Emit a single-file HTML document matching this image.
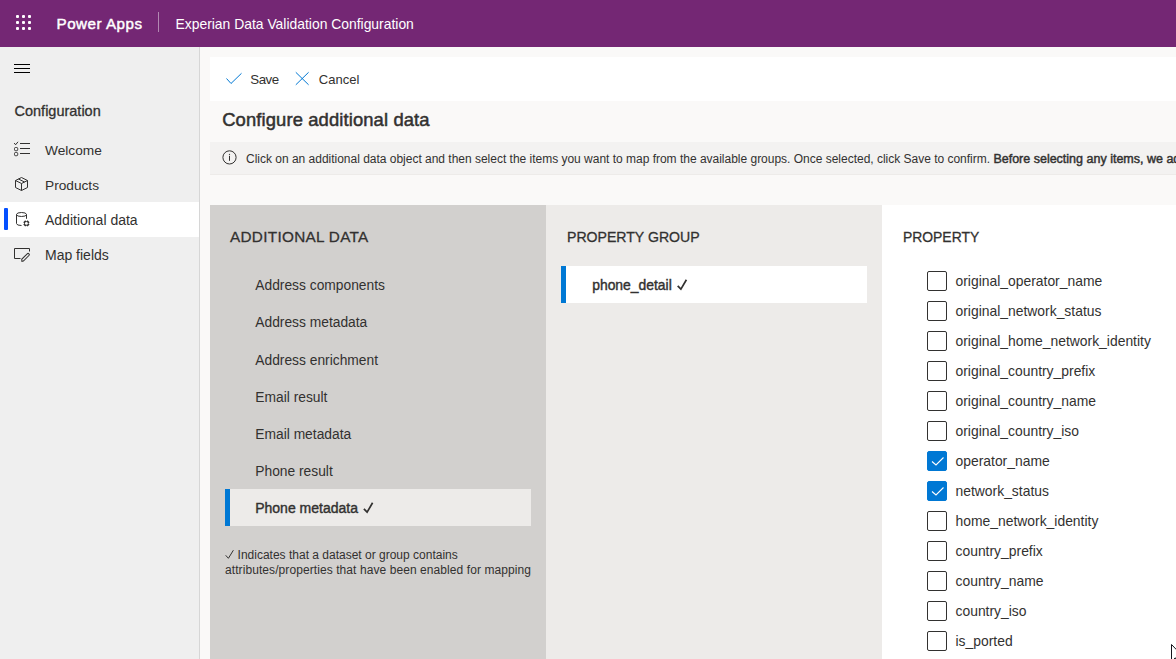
<!DOCTYPE html>
<html><head><meta charset="utf-8">
<style>
*{margin:0;padding:0;box-sizing:border-box}
html,body{width:1176px;height:659px;overflow:hidden;background:#faf9f8;font-family:"Liberation Sans",sans-serif;color:#323130}
.a{position:absolute}
.t{position:absolute;white-space:nowrap}
.dot{position:absolute;width:3px;height:3px;background:#fff;border-radius:1px}
.cb{position:absolute;left:927px;width:20px;height:20px;border:1px solid #323130;border-radius:2px;background:#fff}
.cb.on{background:#0078d4;border-color:#0078d4}
.cb svg{position:absolute;left:-1px;top:-1px}
svg.ic{position:absolute;left:0;top:0;overflow:visible}
</style></head><body>
<div class="a" style="left:0;top:0;width:1176px;height:47px;background:#742774"></div>
<div class="dot" style="left:16px;top:15px"></div>
<div class="dot" style="left:22px;top:15px"></div>
<div class="dot" style="left:28px;top:15px"></div>
<div class="dot" style="left:16px;top:21px"></div>
<div class="dot" style="left:22px;top:21px"></div>
<div class="dot" style="left:28px;top:21px"></div>
<div class="dot" style="left:16px;top:27px"></div>
<div class="dot" style="left:22px;top:27px"></div>
<div class="dot" style="left:28px;top:27px"></div>
<div class="t" style="left:56.5px;top:14.23px;font-size:15.2px;line-height:20px;color:#fff;-webkit-text-stroke:0.45px #fff;letter-spacing:0.5px">Power Apps</div>
<div class="a" style="left:158px;top:12px;width:1px;height:20px;background:rgba(255,255,255,0.45)"></div>
<div class="t" style="left:175.5px;top:14.28px;font-size:13.9px;line-height:20px;color:#fff">Experian Data Validation Configuration</div>
<div class="a" style="left:0;top:47px;width:199px;height:612px;background:#efefef"></div>
<div class="a" style="left:199px;top:47px;width:1px;height:612px;background:#d6d6d6"></div>
<div class="a" style="left:14px;top:64px;width:16px;height:1px;background:#000"></div>
<div class="a" style="left:14px;top:68px;width:16px;height:1px;background:#000"></div>
<div class="a" style="left:14px;top:72px;width:16px;height:1px;background:#000"></div>
<div class="t" style="left:14.5px;top:101.18px;font-size:14.5px;line-height:20px;-webkit-text-stroke:0.3px #323130">Configuration</div>
<div class="a" style="left:0;top:202px;width:199px;height:35px;background:#fff"></div>
<div class="a" style="left:4px;top:208px;width:4px;height:22px;background:#0550ff;border-radius:1px"></div>
<div class="t" style="left:45px;top:141.15px;font-size:13.7px;line-height:20px;">Welcome</div>
<div class="t" style="left:45px;top:175.65px;font-size:13.7px;line-height:20px;">Products</div>
<div class="t" style="left:45px;top:209.75px;font-size:14px;line-height:20px;">Additional data</div>
<div class="t" style="left:45px;top:245.15px;font-size:14px;line-height:20px;">Map fields</div>
<svg class="ic" width="1176" height="659" style="pointer-events:none">
<g fill="none" stroke="#323130" stroke-width="1">
<path d="M14.2 143 L15.6 144.8 L18 141.8"/>
<rect x="14.5" y="147.5" width="3.2" height="3.2" rx="1"/>
<rect x="14.5" y="152.5" width="3.2" height="3.2" rx="1"/>
<path d="M20 143.5 H30 M20 148.5 H30 M20 153.5 H30"/>
<path d="M15.5 180.5 L21.5 177.5 L27.5 180.5 L27.5 187.5 L21.5 190.5 L15.5 187.5 Z M15.5 180.5 L21.5 183.5 L27.5 180.5 M21.5 183.5 V190.5 M18.5 179 L24.5 182"/>
<ellipse cx="21.5" cy="214.5" rx="5" ry="2"/>
<path d="M16.5 214.5 V223.5 A5 2 0 0 0 21.5 225.5 M26.5 214.5 V218.8"/>
<path d="M20.5 258.5 H14.5 V248.5 H29.5 V251.5" stroke-linejoin="miter"/>
<g transform="translate(25.3 257.4) rotate(-45)"><path d="M-5.2 0.4 L-3.9 -1.2 H3.9 A1.2 1.2 0 0 1 3.9 1.2 H-3.9 Z"/></g>
</g>
<g fill="#323130">
<path d="M25.20 220.27 L26.40 221.40 L27.60 220.27 L29.53 222.20 L28.40 223.40 L29.53 224.60 L27.60 226.53 L26.40 225.40 L25.20 226.53 L23.27 224.60 L24.40 223.40 L23.27 222.20 Z"/>
</g>
<circle cx="26.4" cy="223.4" r="1.45" fill="#fff"/>
</svg>
<div class="a" style="left:210px;top:57px;width:966px;height:44px;background:#fff"></div>
<svg class="ic" width="1176" height="659"><g fill="none" stroke="#0078d4" stroke-width="1">
<path d="M226.5 78.5 L231 83.5 L241.5 73.3"/>
<path d="M295.8 72.3 L308.6 84.8 M308.6 72.3 L295.8 84.8"/>
</g></svg>
<div class="t" style="left:250.3px;top:69.69px;font-size:13.3px;line-height:20px;letter-spacing:-0.5px">Save</div>
<div class="t" style="left:318.8px;top:69.80px;font-size:13px;line-height:20px;">Cancel</div>
<div class="t" style="left:222.2px;top:110.12px;font-size:18.4px;line-height:20px;-webkit-text-stroke:0.5px #323130;letter-spacing:0.12px">Configure additional data</div>
<div class="a" style="left:210px;top:142px;width:966px;height:32px;background:#f3f2f1"></div>
<div class="a" style="left:210px;top:174px;width:966px;height:1px;background:#edebe9"></div>
<svg class="ic" width="1176" height="659"><circle cx="229.5" cy="157.4" r="6.6" fill="none" stroke="#323130" stroke-width="1"/>
<rect x="229" y="155.8" width="1" height="5" fill="#323130"/><circle cx="229.5" cy="154.3" r="0.65" fill="#323130"/></svg>
<div class="t" style="left:246px;top:148.84px;font-size:12px;line-height:20px;"><span style="letter-spacing:-0.012px">Click on an additional data object and then select the items you want to map from the available groups. Once selected, click Save to confirm.</span> <span style="font-size:12.5px;-webkit-text-stroke:0.45px #323130">Before selecting any items, we advise</span></div>
<div class="a" style="left:210px;top:205px;width:336px;height:454px;background:#d2d0ce"></div>
<div class="a" style="left:546px;top:205px;width:336px;height:454px;background:#edebe9"></div>
<div class="a" style="left:882px;top:205px;width:294px;height:454px;background:#fff"></div>
<div class="t" style="left:230px;top:226.90px;font-size:15.3px;line-height:20px;letter-spacing:0.3px;-webkit-text-stroke:0.28px #323130">ADDITIONAL DATA</div>
<div class="t" style="left:567px;top:226.91px;font-size:14.1px;line-height:20px;-webkit-text-stroke:0.28px #323130">PROPERTY GROUP</div>
<div class="t" style="left:903px;top:227.08px;font-size:13.9px;line-height:20px;-webkit-text-stroke:0.28px #323130">PROPERTY</div>
<div class="t" style="left:255.3px;top:276.02px;font-size:13.8px;line-height:20px;">Address components</div>
<div class="t" style="left:255.3px;top:313.02px;font-size:13.8px;line-height:20px;">Address metadata</div>
<div class="t" style="left:255.3px;top:351.22px;font-size:13.8px;line-height:20px;">Address enrichment</div>
<div class="t" style="left:255.3px;top:388.22px;font-size:13.8px;line-height:20px;">Email result</div>
<div class="t" style="left:255.3px;top:425.22px;font-size:13.8px;line-height:20px;">Email metadata</div>
<div class="t" style="left:255.3px;top:462.02px;font-size:13.8px;line-height:20px;">Phone result</div>
<div class="a" style="left:225px;top:489px;width:306px;height:37px;background:#edebe9"></div>
<div class="a" style="left:225px;top:489px;width:5px;height:37px;background:#0078d4"></div>
<div class="t" style="left:255.2px;top:498.45px;font-size:14px;line-height:20px;-webkit-text-stroke:0.4px #323130">Phone metadata</div>
<svg class="ic" width="1176" height="659"><path d="M363.9 508.8 L367.1 512.2 L372.6 502.8" fill="none" stroke="#323130" stroke-width="1.7"/></svg>
<div class="t" style="left:237.6px;top:546.64px;font-size:12px;line-height:16px;">Indicates that a dataset or group contains</div>
<div class="t" style="left:225px;top:562.34px;font-size:12px;line-height:16px;letter-spacing:0.08px">attributes/properties that have been enabled for mapping</div>
<svg class="ic" width="1176" height="659"><path d="M225.7 555.3 L228.4 558.3 L233.4 550.2" fill="none" stroke="#323130" stroke-width="1"/></svg>
<div class="a" style="left:561px;top:266px;width:306px;height:37px;background:#fff"></div>
<div class="a" style="left:561px;top:266px;width:5px;height:37px;background:#0078d4"></div>
<div class="t" style="left:592.2px;top:275.18px;font-size:13.9px;line-height:20px;-webkit-text-stroke:0.4px #323130">phone_detail</div>
<svg class="ic" width="1176" height="659"><path d="M677.7 285.8 L680.9 289.2 L686.4 279.8" fill="none" stroke="#323130" stroke-width="1.7"/></svg>
<div class="cb" style="top:271px"></div>
<div class="t" style="left:955.5px;top:270.98px;font-size:13.9px;line-height:20px;">original_operator_name</div>
<div class="cb" style="top:301px"></div>
<div class="t" style="left:955.5px;top:300.98px;font-size:13.9px;line-height:20px;">original_network_status</div>
<div class="cb" style="top:331px"></div>
<div class="t" style="left:955.5px;top:330.98px;font-size:13.9px;line-height:20px;">original_home_network_identity</div>
<div class="cb" style="top:361px"></div>
<div class="t" style="left:955.5px;top:360.98px;font-size:13.9px;line-height:20px;">original_country_prefix</div>
<div class="cb" style="top:391px"></div>
<div class="t" style="left:955.5px;top:390.98px;font-size:13.9px;line-height:20px;">original_country_name</div>
<div class="cb" style="top:421px"></div>
<div class="t" style="left:955.5px;top:420.98px;font-size:13.9px;line-height:20px;">original_country_iso</div>
<div class="cb on" style="top:451px"><svg width="20" height="20"><path d="M5 10.5 L9 14 L16.5 6.5" fill="none" stroke="#fff" stroke-width="1.1"/></svg></div>
<div class="t" style="left:955.5px;top:450.98px;font-size:13.9px;line-height:20px;">operator_name</div>
<div class="cb on" style="top:481px"><svg width="20" height="20"><path d="M5 10.5 L9 14 L16.5 6.5" fill="none" stroke="#fff" stroke-width="1.1"/></svg></div>
<div class="t" style="left:955.5px;top:480.98px;font-size:13.9px;line-height:20px;">network_status</div>
<div class="cb" style="top:511px"></div>
<div class="t" style="left:955.5px;top:510.98px;font-size:13.9px;line-height:20px;">home_network_identity</div>
<div class="cb" style="top:541px"></div>
<div class="t" style="left:955.5px;top:540.98px;font-size:13.9px;line-height:20px;">country_prefix</div>
<div class="cb" style="top:571px"></div>
<div class="t" style="left:955.5px;top:570.98px;font-size:13.9px;line-height:20px;">country_name</div>
<div class="cb" style="top:601px"></div>
<div class="t" style="left:955.5px;top:600.98px;font-size:13.9px;line-height:20px;">country_iso</div>
<div class="cb" style="top:631px"></div>
<div class="t" style="left:955.5px;top:630.98px;font-size:13.9px;line-height:20px;">is_ported</div>
<svg class="ic" width="1176" height="659"><path d="M1171.5 644.5 V661.5 L1175.3 657.8 L1178.5 664.5 L1180.5 663.5 L1177.5 656.5 L1183 656.5 Z" fill="#fff" stroke="#14141c" stroke-width="1" stroke-linejoin="miter"/></svg>
</body></html>
